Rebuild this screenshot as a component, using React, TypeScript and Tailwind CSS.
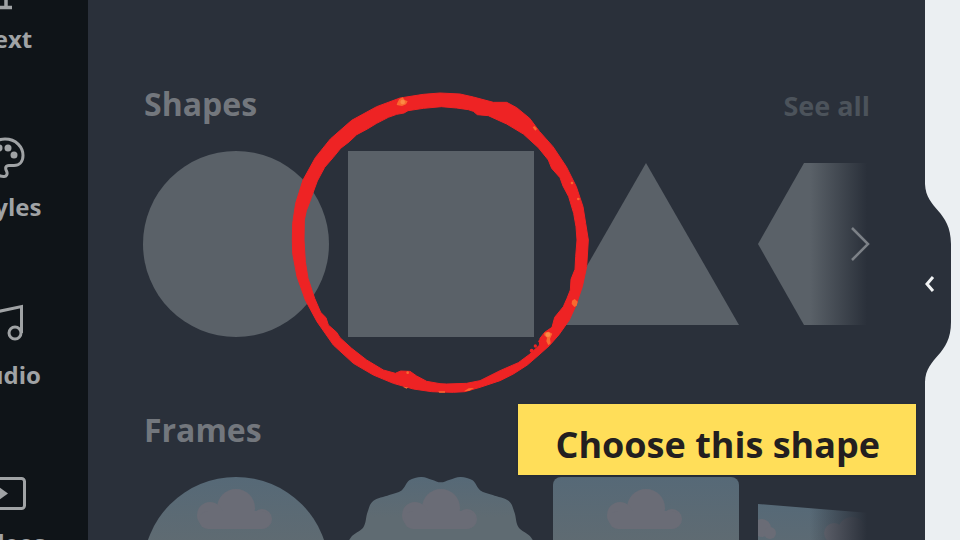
import React from 'react';

type Point = [number, number];

// closed Catmull-Rom curve through the given points
function smoothPath(points: Point[]) {
  const n = points.length;
  let d = `M${points[0][0]} ${points[0][1]}`;
  for (let i = 0; i < n; i++) {
    const p0 = points[(i - 1 + n) % n];
    const p1 = points[i];
    const p2 = points[(i + 1) % n];
    const p3 = points[(i + 2) % n];
    d += `C${p1[0] + (p2[0] - p0[0]) / 6} ${p1[1] + (p2[1] - p0[1]) / 6} ${p2[0] - (p3[0] - p1[0]) / 6} ${p2[1] - (p3[1] - p1[1]) / 6} ${p2[0]} ${p2[1]}`;
  }
  return d + 'Z';
}

const ringOuter: Point[] = [
  [37, 480], [38, 430], [47, 370], [69, 300], [106, 233], [151, 177], [215, 121], [290, 80],
  [360, 54], [430, 43], [480, 39], [540, 42], [580, 51], [640, 67], [680, 67], [710, 83],
  [749, 115], [779, 155], [819, 200], [859, 260], [889, 320], [909, 380], [917, 430], [925, 480],
  [920, 560], [907, 620], [888, 676], [868, 720], [837, 764], [808, 797], [780, 822], [742, 855],
  [700, 882], [660, 902], [600, 922], [555, 935], [520, 937], [480, 936], [455, 935], [400, 927],
  [340, 910], [280, 885], [220, 850], [160, 795], [111, 725], [76, 660], [51, 590], [38, 520],
];

const ringInner: Point[] = [
  [72, 480], [73, 420], [79, 392], [84, 380], [94, 352], [112, 303], [134, 262], [160, 232],
  [182, 205], [208, 185], [230, 164], [262, 147], [290, 130], [325, 112], [350, 103], [372, 99],
  [384, 92], [430, 85], [484, 80], [530, 84], [565, 89], [580, 94], [592, 104], [625, 107],
  [680, 132], [730, 162], [775, 203], [805, 240], [815, 265], [840, 293], [849, 318], [866, 350],
  [881, 400], [888, 440], [891, 480], [887, 530], [885, 568], [873, 598], [871, 630], [861, 655],
  [850, 680], [824, 712], [816, 742], [794, 757], [780, 775], [778, 796], [750, 822], [715, 848],
  [660, 872], [600, 902], [560, 910], [500, 912], [480, 911], [440, 904], [410, 888], [390, 874],
  [362, 873], [346, 880], [310, 870], [260, 840], [215, 805], [180, 773], [170, 757], [145, 735],
  [138, 713], [122, 697], [104, 655], [84, 595], [76, 545],
];

const scallop: Point[] = [
  [-20, 330], [-10, 230], [8, 181], [46, 150], [58, 106], [75, 72], [123, 54], [160, 40], [183, 10],
  [218, 0], [250, 8], [277, 16], [304, 8], [337, 0], [372, 10], [395, 40], [432, 54], [480, 72],
  [497, 106], [509, 150], [547, 181], [565, 230], [575, 330],
];

const navItems = [
  {
    label: 'Text',
    icon: <path d="M6 4v-2h28v4M20 4v34M13 38.500h13" strokeWidth="3.500" />,
  },
  {
    label: 'Styles',
    icon: (
      <>
        <path d="M19 2C30 2 37 10 37 18.500C37 25 33 28.500 28 28.500H23C19.500 28.500 19 31 20.500 34C22 37 20.500 40 17.500 39.500C8 39 1.500 30 1.500 21C1.500 10 9 2 19 2Z" />
        <g fill="currentColor" stroke="none">
          <circle cx="7" cy="18" r="3.500" />
          <circle cx="13" cy="11" r="3.500" />
          <circle cx="22" cy="11" r="3.500" />
          <circle cx="28" cy="18" r="3.500" />
        </g>
      </>
    ),
  },
  {
    label: 'Audio',
    icon: (
      <>
        <path d="M10 34V7L35.500 1.500V28" />
        <circle cx="4" cy="34" r="6" />
        <circle cx="29" cy="28" r="6" />
      </>
    ),
  },
  {
    label: 'Videos',
    icon: (
      <>
        <rect x="1" y="5.500" width="37.500" height="30" rx="3" />
        <path d="M13 14L22 20.500L13 27Z" fill="currentColor" stroke="none" />
      </>
    ),
  },
];

const shapes = [
  { name: 'Circle', art: <circle cx="93" cy="93" r="93" /> },
  { name: 'Square', art: <rect width="186" height="186" /> },
  { name: 'Triangle', art: <path d="M93 12L186 174H0Z" /> },
  { name: 'Hexagon', art: <path d="M0 93L46 12H140L186 93L140 174H46Z" /> },
];

function Cloud() {
  return (
    <g fill="#6a6c76">
      <circle cx="93" cy="31" r="19" />
      <circle cx="67" cy="38" r="13" />
      <circle cx="119" cy="42" r="10" />
      <rect x="56" y="34" width="72" height="18" rx="9" />
    </g>
  );
}

const frames = [
  { name: 'Circle frame', art: <><circle cx="93" cy="93" r="93" fill="url(#sky)" /><Cloud /></> },
  {
    name: 'Scalloped frame',
    art: (
      <>
        <g transform="scale(0.335)">
          <path d={smoothPath(scallop)} fill="url(#sky)" />
        </g>
        <Cloud />
      </>
    ),
  },
  { name: 'Rounded frame', art: <><rect width="186" height="186" rx="8" fill="url(#sky)" /><Cloud /></> },
  {
    name: 'Tilted frame',
    art: (
      <>
        <path d="M0 27L186 42V186H0Z" fill="url(#sky)" />
        <g fill="#6a6c76">
          <circle cx="4" cy="51" r="9" />
          <circle cx="12" cy="56" r="6" />
          <circle cx="76" cy="56" r="10" />
          <circle cx="94" cy="54" r="14" />
        </g>
      </>
    ),
  },
];

interface ShelfProps {
  title: string;
  items: { name: string; art: React.ReactNode }[];
  more?: boolean;
}

function Shelf({ title, items, more }: ShelfProps) {
  return (
    <section>
      <div className="flex h-10 items-baseline justify-between">
        <h2 className="text-[32px] leading-10 font-bold text-[#73777d]">{title}</h2>
        {more && (
          <a href="#all" className="text-[27px] leading-10 font-bold text-[#4c535b]">
            See all
          </a>
        )}
      </div>
      <div className="relative mt-[27px] -ml-px flex gap-[19px] overflow-hidden">
        {items.map((item) => (
          <button key={item.name} type="button" aria-label={item.name} className="shrink-0">
            <svg viewBox="0 0 186 186" className="block size-[186px]" fill="#5a6168">
              {item.art}
            </svg>
          </button>
        ))}
        <button
          type="button"
          aria-label={`More ${title.toLowerCase()}`}
          className="absolute inset-y-0 right-0 flex w-[60px] items-center justify-end bg-linear-to-r from-[#2a303a]/0 to-[#2a303a] to-95%"
        >
          {more && (
            <svg viewBox="0 0 20 36" className="h-9 w-5" fill="none" stroke="#7c8187" strokeWidth="2.500">
              <path d="M2 2L18 18L2 34" />
            </svg>
          )}
        </button>
      </div>
    </section>
  );
}

function Ring() {
  return (
    <svg viewBox="0 0 960 960" className="pointer-events-none absolute top-20 left-[280px] size-80">
      <path
        d={`M${ringOuter.join('L')}ZM${ringInner.join('L')}Z`}
        fill="#ee2324"
        fillRule="evenodd"
        stroke="#ee2324"
        strokeWidth="3"
        strokeLinejoin="round"
      />
      <g fill="#ee2324">
        <circle cx="766" cy="798" r="5" />
        <circle cx="755" cy="812" r="6" />
        <circle cx="779" cy="784" r="4" />
      </g>
      <g fill="#f9692f">
        <path d="M352 68L358 57L368 52L374 60L383 64L378 73L366 78L350 75Z" />
        <path d="M758 142L764 138L771 147L766 152Z" />
        <path d="M876 662L884 657L893 665L890 677L883 681L875 672Z" />
        <path d="M793 758L806 755L817 761L810 776L812 790L805 796L799 784L801 773L793 766Z" />
        <path d="M552 934L566 925L582 924L568 932Z" />
        <path d="M475 934H495V938H478Z" />
        <path d="M368 920L384 922L380 926Z" />
        <circle cx="383" cy="878" r="4" />
        <circle cx="876" cy="309" r="4" />
        <circle cx="895" cy="357" r="4" />
      </g>
      <g fill="#fb8a45">
        <circle cx="368" cy="66" r="7" />
        <circle cx="804" cy="764" r="7" />
      </g>
    </svg>
  );
}

export default function App() {
  return (
    <div className="relative flex h-screen overflow-hidden bg-[#ebeff2] font-['Open_Sans','Noto_Sans',sans-serif]">
      <svg className="absolute size-0" aria-hidden="true">
        <defs>
          <linearGradient id="sky" x1="0" y1="0" x2="0" y2="1">
            <stop offset="0" stopColor="#566977" />
            <stop offset="0.35" stopColor="#5f6b72" />
          </linearGradient>
        </defs>
      </svg>

      <aside className="w-22 shrink-0 overflow-hidden bg-[#0f1418]">
        <nav className="-mt-[31px] -ml-[75px] flex w-[162px] flex-col gap-[82px]">
          {navItems.map((item) => (
            <a key={item.label} href={`#${item.label}`} className="flex flex-col items-center gap-3.5 text-[#a0a3a5]">
              <svg viewBox="0 0 40 40" className="size-10 overflow-visible" fill="none" stroke="currentColor" strokeWidth="3">
                {item.icon}
              </svg>
              <span className="text-2xl leading-8 font-bold">{item.label}</span>
            </a>
          ))}
        </nav>
      </aside>

      <main className="flex min-w-0 flex-1 flex-col gap-[73px] bg-[#2a303a] pt-[84px] pr-[55px] pl-14">
        <Shelf title="Shapes" items={shapes} more />
        <Shelf title="Frames" items={frames} />
      </main>

      <div className="relative w-[35px] shrink-0">
        <button type="button" aria-label="Hide panel" className="absolute top-[184px] left-0">
          <svg viewBox="0 0 27 198" className="block h-[198px] w-[27px]">
            <path d="M0 0C1 26 26 26 26 60V138C26 172 1 172 0 198Z" fill="#2a303a" />
            <path d="M8 93L2 100L8 107" fill="none" stroke="#f1f3f4" strokeWidth="3" />
          </svg>
        </button>
      </div>

      <Ring />
      <p className="absolute top-[404px] right-11 bg-[#ffde59] pt-[18px] pr-9 pb-2 pl-[37px] text-4xl leading-[45px] font-bold whitespace-nowrap text-[#231f20] shadow-sm">
        Choose this shape
      </p>
    </div>
  );
}
